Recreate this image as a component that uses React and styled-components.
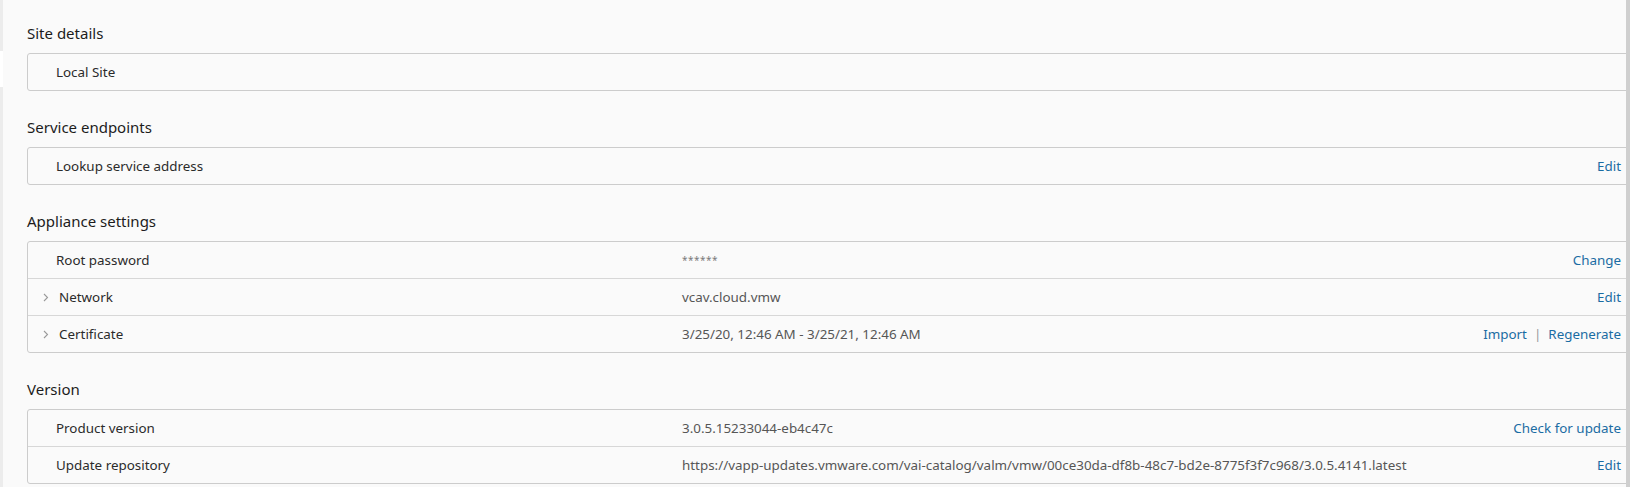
import React from "react";
import styled, { createGlobalStyle } from "styled-components";

const GlobalStyle = createGlobalStyle`
  html, body {
    margin: 0;
    padding: 0;
    background: #fafafa;
  }
  body {
    font-family: "Noto Sans", "Open Sans", sans-serif;
    color: #313131;
  }
`;

const sections = [
  {
    title: "Site details",
    rows: [{ label: "Local Site" }],
  },
  {
    title: "Service endpoints",
    rows: [{ label: "Lookup service address", actions: ["Edit"] }],
  },
  {
    title: "Appliance settings",
    rows: [
      { label: "Root password", value: "******", masked: true, actions: ["Change"] },
      { label: "Network", value: "vcav.cloud.vmw", expandable: true, actions: ["Edit"] },
      {
        label: "Certificate",
        value: "3/25/20, 12:46 AM - 3/25/21, 12:46 AM",
        expandable: true,
        actions: ["Import", "Regenerate"],
      },
    ],
  },
  {
    title: "Version",
    rows: [
      {
        label: "Product version",
        value: "3.0.5.15233044-eb4c47c",
        actions: ["Check for update"],
      },
      {
        label: "Update repository",
        value:
          "https://vapp-updates.vmware.com/vai-catalog/valm/vmw/00ce30da-df8b-48c7-bd2e-8775f3f7c968/3.0.5.4141.latest",
        actions: ["Edit"],
      },
    ],
  },
];

const Chevron = () => (
  <svg width="6" height="9" viewBox="0 0 6 9">
    <polyline
      points="1,1 4.5,4.5 1,8"
      fill="none"
      stroke="#9a9a9a"
      strokeWidth="1.1"
    />
  </svg>
);

const Page = () => (
  <Frame>
    <GlobalStyle />
    <SideStrip>
      <SideMark />
    </SideStrip>
    <Main>
      {sections.map((section) => (
        <Section key={section.title}>
          <SectionTitle>{section.title}</SectionTitle>
          <Card>
            {section.rows.map((row) => (
              <Row key={row.label}>
                <LabelCell>
                  <Toggle>{row.expandable && <Chevron />}</Toggle>
                  <Label $shift={row.expandable}>{row.label}</Label>
                </LabelCell>
                <Value $masked={row.masked}>{row.value}</Value>
                <Actions>
                  {(row.actions || []).map((action, i) => (
                    <React.Fragment key={action}>
                      {i > 0 && <Divider>|</Divider>}
                      <ActionLink href="#">{action}</ActionLink>
                    </React.Fragment>
                  ))}
                </Actions>
              </Row>
            ))}
          </Card>
        </Section>
      ))}
    </Main>
    <Scrollbar />
  </Frame>
);

const Frame = styled.div`
  display: flex;
  width: 1630px;
  height: 487px;
  overflow: hidden;
  background: #fafafa;
`;

const SideStrip = styled.div`
  width: 3px;
  flex-shrink: 0;
  background: #ececec;
  padding-top: 51px;
`;

const SideMark = styled.div`
  height: 36px;
  background: #ffffff;
`;

const Main = styled.main`
  flex: 1;
  overflow: hidden;
  padding: 23px 0 0 24px;
`;

const Scrollbar = styled.div`
  width: 4px;
  flex-shrink: 0;
  background: #cfcfcf;
`;

const Section = styled.section`
  margin-bottom: 26px;
`;

const SectionTitle = styled.h2`
  margin: 0 0 10px;
  font-size: 15px;
  line-height: 20px;
  font-weight: 400;
  color: #1c1c1c;
`;

const Card = styled.div`
  margin-right: -8px;
  border: 1px solid #cccccc;
  border-radius: 3px;
  background: #fafafa;
`;

const Row = styled.div`
  display: grid;
  grid-template-columns: 654px 1fr auto;
  align-items: center;
  height: 36px;
  padding-right: 12px;
  font-size: 13.4px;
  & + & {
    border-top: 1px solid #d7d7d7;
  }
`;

const LabelCell = styled.div`
  display: flex;
  align-items: center;
  padding-left: 15px;
`;

const Toggle = styled.span`
  display: flex;
  width: 6px;
`;

const Label = styled.span`
  margin-left: ${({ $shift }) => ($shift ? "10px" : "7px")};
  color: #2b2b2b;
`;

const Value = styled.span`
  color: ${({ $masked }) => ($masked ? "#7a7a7a" : "#565656")};
  font-size: ${({ $masked }) => ($masked ? "10px" : "13.4px")};
  letter-spacing: ${({ $masked }) => ($masked ? "0.5px" : "0")};
  white-space: nowrap;
`;

const Actions = styled.span`
  display: flex;
  align-items: center;
  gap: 7px;
`;

const ActionLink = styled.a`
  color: #1a6ca3;
  text-decoration: none;
`;

const Divider = styled.span`
  color: #9a9a9a;
`;

export default Page;
